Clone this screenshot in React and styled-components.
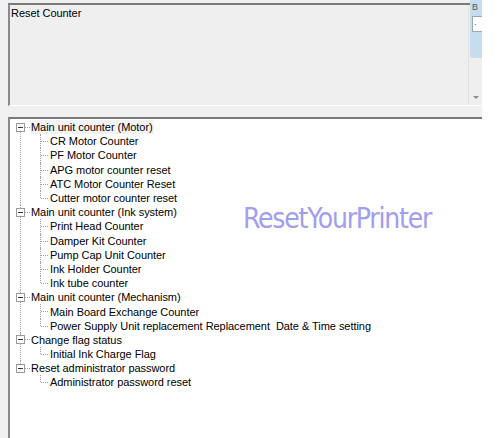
import React from 'react';
import styled, { createGlobalStyle } from 'styled-components';

const GlobalStyle = createGlobalStyle`
    html, body {
        margin: 0;
        padding: 0;
        background: #ffffff;
        overflow: hidden;
    }
`

const tree = [
    {
        label: 'Main unit counter (Motor)',
        items: ['CR Motor Counter', 'PF Motor Counter', 'APG motor counter reset', 'ATC Motor Counter Reset', 'Cutter motor counter reset'],
    },
    {
        label: 'Main unit counter (Ink system)',
        items: ['Print Head Counter', 'Damper Kit Counter', 'Pump Cap Unit Counter', 'Ink Holder Counter', 'Ink tube counter'],
    },
    {
        label: 'Main unit counter (Mechanism)',
        items: ['Main Board Exchange Counter', 'Power Supply Unit replacement Replacement  Date & Time setting'],
    },
    {
        label: 'Change flag status',
        items: ['Initial Ink Charge Flag'],
    },
    {
        label: 'Reset administrator password',
        items: ['Administrator password reset'],
    },
]

const App = () => {
    return (
        <>
            <GlobalStyle />
            <Window>
                <Main>
                    <TopBox>
                        <TextArea>Reset Counter</TextArea>
                        <ScrollBar>
                            <Arrow />
                        </ScrollBar>
                    </TopBox>
                    <TreeBox>
                        {tree.map((group, gi) => (
                            <Group key={group.label} $first={gi === 0} $last={gi === tree.length - 1}>
                                <RootRow>
                                    <Expander><span /></Expander>
                                    <Dash />
                                    <Label $selected={gi === 0}>{group.label}</Label>
                                </RootRow>
                                {group.items.map((item, i) => (
                                    <ChildRow key={item} $last={i === group.items.length - 1}>
                                        <Label>{item}</Label>
                                    </ChildRow>
                                ))}
                            </Group>
                        ))}
                        <Watermark>ResetYourPrinter</Watermark>
                    </TreeBox>
                </Main>
                <SidePanel>
                    <span>B</span>
                    <SideInput>·</SideInput>
                </SidePanel>
            </Window>
        </>
    )
}

const Window = styled.div`
    position: relative;
    width: 482px;
    height: 438px;
    background: #f0f0f0;
    font-family: "Liberation Sans", Arial, sans-serif;
    font-size: 11px;
    letter-spacing: -0.05px;
    color: #000;
    overflow: hidden;
`

const Main = styled.div`
    display: flex;
    flex-direction: column;
    padding: 3px 0 0 8px;
    gap: 11px;
    height: 100%;
    box-sizing: border-box;
`

const TopBox = styled.div`
    display: flex;
    height: 103px;
    box-sizing: border-box;
    border-top: 2px solid #7a7a7a;
    border-left: 2px solid #8a8a8a;
    border-bottom: 1px solid #ffffff;
    background: #efefef;
`

const TextArea = styled.div`
    flex: 1;
    padding: 1px 1px;
    line-height: 14px;
`

const ScrollBar = styled.div`
    width: 13px;
    border-left: 1px solid #e2e2e2;
    display: flex;
    flex-direction: column;
    justify-content: flex-end;
    align-items: center;
    padding-bottom: 6px;
`

const Arrow = styled.div`
    width: 0;
    height: 0;
    border-left: 3px solid transparent;
    border-right: 3px solid transparent;
    border-top: 3px solid #8a8a8a;
`

const TreeBox = styled.div`
    position: relative;
    flex: 1;
    background: #ffffff;
    border-top: 2px solid #7a7a7a;
    border-left: 2px solid #8a8a8a;
    padding: 1px 0 0 6px;
`

const Group = styled.div`
    position: relative;
    &::before {
        content: '';
        position: absolute;
        left: 4px;
        top: ${p => (p.$first ? '7px' : '0')};
        ${p => (p.$last ? 'height: 7px;' : 'bottom: 0;')}
        border-left: 1px dotted #a0a0a0;
    }
`

const RootRow = styled.div`
    position: relative;
    display: flex;
    align-items: center;
    height: 14.2px;
`

const Expander = styled.div`
    position: relative;
    z-index: 1;
    width: 9px;
    height: 9px;
    box-sizing: border-box;
    border: 1px solid #9a9a9a;
    background: #fff;
    display: flex;
    align-items: center;
    justify-content: center;
    span {
        display: block;
        width: 5px;
        height: 1px;
        background: #333;
    }
`

const Dash = styled.div`
    width: 5px;
    border-top: 1px dotted #a0a0a0;
`

const Label = styled.span`
    padding: 0 1px;
    white-space: pre;
    line-height: 14px;
    background: ${p => (p.$selected ? '#f3f3f3' : 'transparent')};
`

const ChildRow = styled.div`
    position: relative;
    display: flex;
    align-items: center;
    height: 14.2px;
    padding-left: 33px;
    &::before {
        content: '';
        position: absolute;
        left: 24px;
        top: 0;
        ${p => (p.$last ? 'height: 7px;' : 'bottom: 0;')}
        border-left: 1px dotted #a0a0a0;
    }
    &::after {
        content: '';
        position: absolute;
        left: 25px;
        top: 7px;
        width: 7px;
        border-top: 1px dotted #a0a0a0;
    }
`

const Watermark = styled.div`
    position: absolute;
    left: 233px;
    top: 83px;
    font-family: "DejaVu Sans Condensed", "DejaVu Sans", sans-serif;
    font-size: 28px;
    color: #9f9ef1;
    letter-spacing: -1.2px;
`

const SidePanel = styled.div`
    position: absolute;
    left: 470px;
    top: 0;
    width: 12px;
    height: 58px;
    background: #c6ddef;
    border-bottom-left-radius: 3px;
    display: flex;
    flex-direction: column;
    gap: 4px;
    padding: 2px 0 0 2px;
    box-sizing: border-box;
    font-size: 9px;
    color: #555;
    span {
        line-height: 10px;
    }
`

const SideInput = styled.div`
    width: 10px;
    height: 14px;
    background: #fff;
    border: 1px solid #9aa;
    line-height: 14px;
    padding-left: 1px;
`

export default App;
